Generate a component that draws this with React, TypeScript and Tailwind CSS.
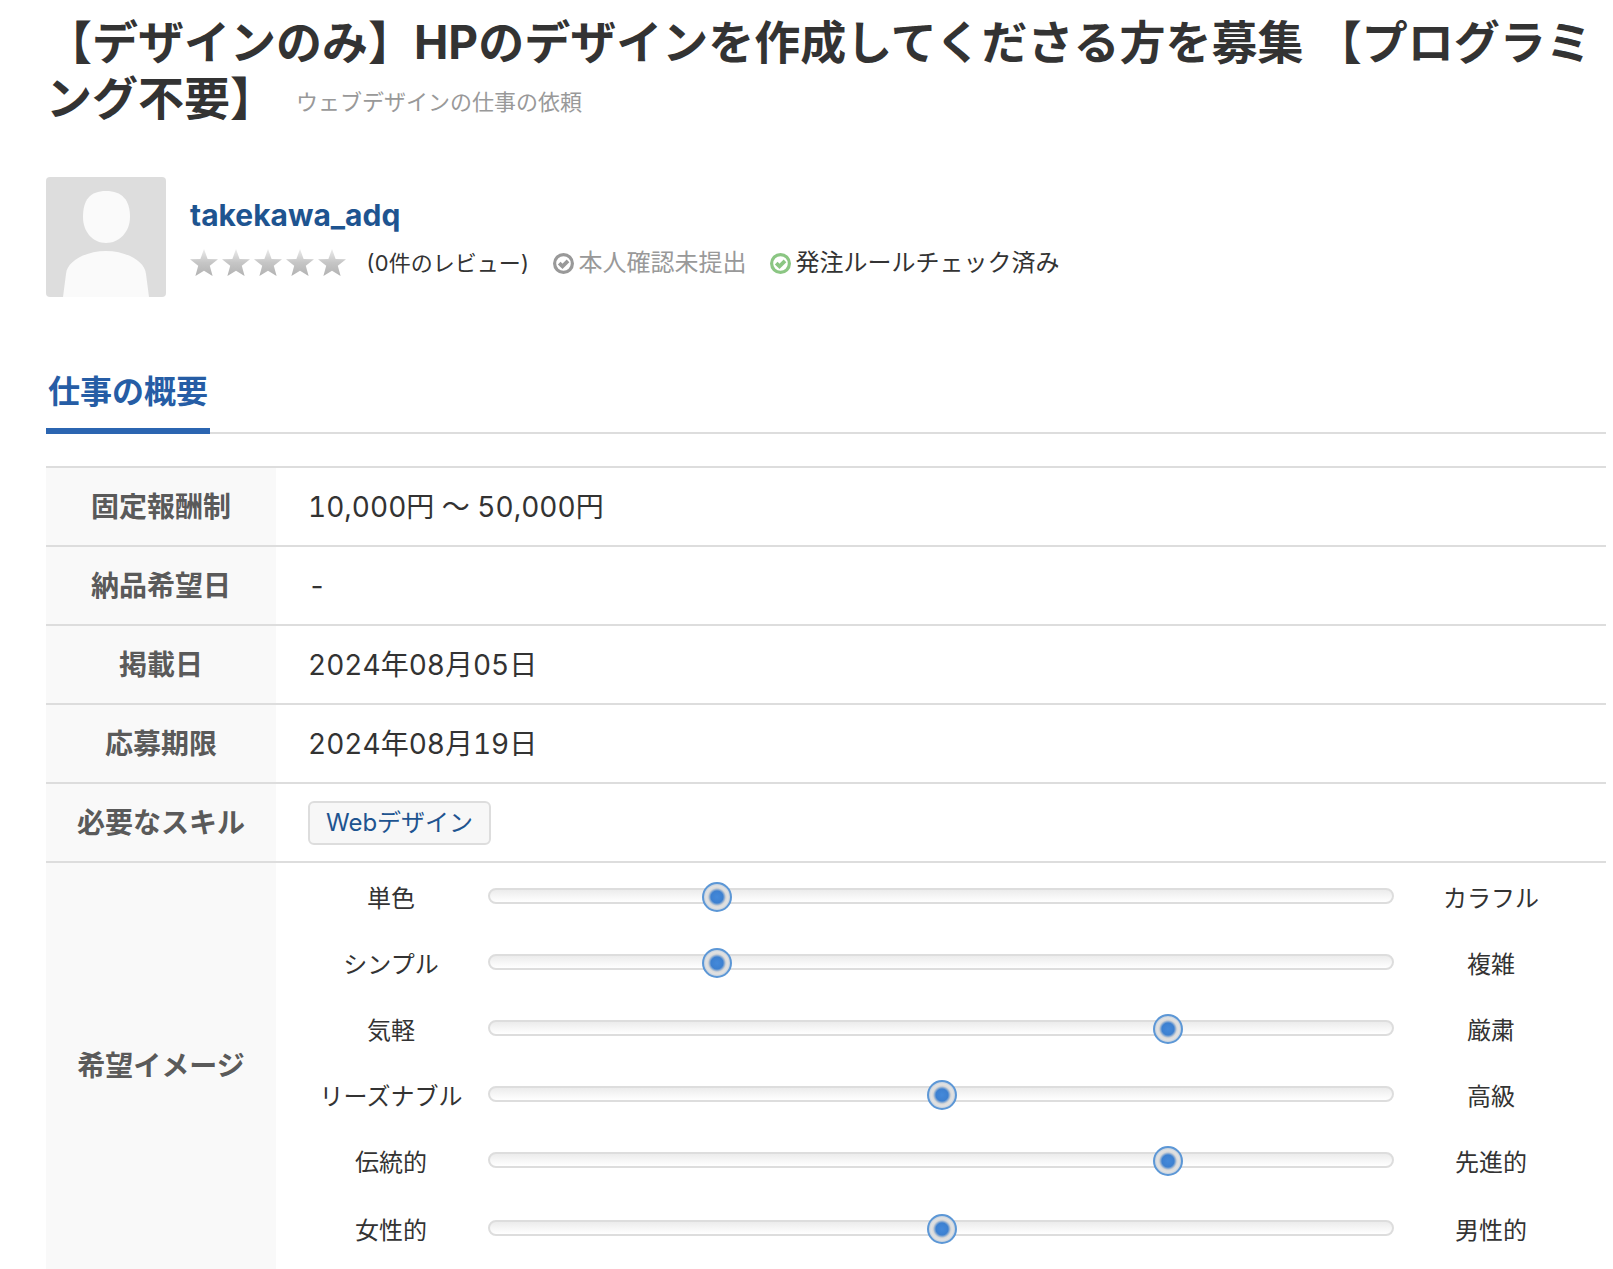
interface ImageScale {
  id: string;
  left: string;
  right: string;
  value: number;
}

const imageScales: ImageScale[] = [
  { id: 'color', left: '単色', right: 'カラフル', value: 1 },
  { id: 'complexity', left: 'シンプル', right: '複雑', value: 1 },
  { id: 'mood', left: '気軽', right: '厳粛', value: 3 },
  { id: 'price', left: 'リーズナブル', right: '高級', value: 2 },
  { id: 'tradition', left: '伝統的', right: '先進的', value: 3 },
  { id: 'gender', left: '女性的', right: '男性的', value: 2 },
];

const summaryRows = [
  { label: '固定報酬制', value: '10,000円 〜 50,000円' },
  { label: '納品希望日', value: '-' },
  { label: '掲載日', value: '2024年08月05日' },
  { label: '応募期限', value: '2024年08月19日' },
];

const thClass =
  'w-[230px] border-t-2 border-[#ddd] bg-[#f9f9f9] text-center text-[28px] leading-10 font-bold text-[#5a5a5a]';
const tdClass = 'h-[79px] border-t-2 border-[#ddd] px-8 text-[28px] leading-10';

function Avatar() {
  return (
    <svg viewBox="0 0 120 120" className="size-[120px] shrink-0 rounded" aria-hidden="true">
      <rect width="120" height="120" fill="#ddd" />
      <path
        d="M60 14C76 14 84 23 84 40C84 55 73 66 60 66C47 66 37 55 37 40C37 23 44 14 60 14Z"
        fill="#fafafa"
      />
      <path
        d="M17 120L20 97C21 84 40 74 60 74C80 74 99 84 100 97L103 120Z"
        fill="#fafafa"
      />
    </svg>
  );
}

function Stars() {
  return (
    <svg viewBox="0 0 156 28" className="h-7 w-[156px]" role="img" aria-label="評価 0">
      <defs>
        <linearGradient id="star" x1="0" y1="0" x2="0" y2="1">
          <stop offset="0" stopColor="#ececec" />
          <stop offset="0.5" stopColor="#c6c6c6" />
          <stop offset="1" stopColor="#b2b2b2" />
        </linearGradient>
      </defs>
      {[0, 32, 64, 96, 128].map((x) => (
        <path
          key={x}
          d="M14 0L17.6 10L28 10.3L19.8 16.8L22.6 27L14 21.8L5.4 27L8.2 16.8L0 10.3L10.4 10Z"
          transform={`translate(${x})`}
          fill="url(#star)"
        />
      ))}
    </svg>
  );
}

function CheckIcon({ className }: { className: string }) {
  return (
    <svg viewBox="0 0 21 21" className={`size-[21px] ${className}`} fill="none" stroke="currentColor" aria-hidden="true">
      <circle cx="10.5" cy="10.5" r="8.9" strokeWidth="3.2" />
      <path d="M6.2 10.1L9.5 13.3L15 7.9" strokeWidth="3.8" />
    </svg>
  );
}

function ScaleRow({ scale }: { scale: ImageScale }) {
  return (
    <div className="grid h-[66px] grid-cols-[166px_1fr_166px] items-center gap-x-3.5 text-center text-[24px] leading-8 last:mt-0.5">
      <label htmlFor={scale.id} className="pt-1.5">
        {scale.left}
      </label>
      <div className="relative h-4 rounded-full border-2 border-[#ddd] bg-linear-to-b from-[#ececec] to-white">
        <input
          id={scale.id}
          type="range"
          min={0}
          max={4}
          defaultValue={scale.value}
          className="absolute -top-2 -left-3.5 h-[30px] w-[calc(100%+30px)] appearance-none bg-transparent [&::-webkit-slider-thumb]:size-[30px] [&::-webkit-slider-thumb]:appearance-none [&::-webkit-slider-thumb]:rounded-full [&::-webkit-slider-thumb]:border-2 [&::-webkit-slider-thumb]:border-[#5c97d6] [&::-webkit-slider-thumb]:bg-[radial-gradient(circle,#4489da_0,#3d80d0_6px,#a9bdd4_8px,#d9d9d9_9px,#e2e2e2_11px,#b4c8de_14px)]"
        />
      </div>
      <span className="pt-1.5">{scale.right}</span>
    </div>
  );
}

export default function App() {
  return (
    <main
      lang="ja"
      className="bg-white pt-3.5 pr-[7px] pl-[46px] font-['Inter','Noto_Sans_CJK_JP',sans-serif] text-[#333] tabular-nums"
    >
      <h1 className="text-[46px] leading-14 font-bold">
        【デザインのみ】HPのデザインを作成してくださる方を募集 【プログラミング不要】
        <span className="ml-5 inline-block align-[5px] text-[22px] leading-8 font-normal text-[#999]">
          ウェブデザインの仕事の依頼
        </span>
      </h1>

      <section className="mt-[51px] flex gap-6">
        <Avatar />
        <div className="pt-5">
          <a href="#client" className="block text-[30px] leading-9 font-bold text-[#1e5490]">
            takekawa_adq
          </a>
          <div className="mt-3.5 flex items-center text-[24px] leading-8">
            <Stars />
            <span className="ml-5 text-[22px]">(0件のレビュー)</span>
            <span className="ml-6 flex items-center gap-1 text-[#999]">
              <CheckIcon className="text-[#999]" />
              本人確認未提出
            </span>
            <span className="ml-6 flex items-center gap-1">
              <CheckIcon className="text-[#8bc683]" />
              発注ルールチェック済み
            </span>
          </div>
        </div>
      </section>

      <div className="mt-[71px] flex border-b-2 border-[#ddd]">
        <h2 className="-mb-0.5 border-b-6 border-[#2b65b1] px-0.5 pb-3 text-[32px] leading-12 font-bold text-[#265da5]">
          仕事の概要
        </h2>
      </div>

      <table className="mt-8 w-full border-separate border-spacing-0">
        <tbody>
          {summaryRows.map((row) => (
            <tr key={row.label}>
              <th scope="row" className={thClass}>
                {row.label}
              </th>
              <td className={tdClass}>{row.value}</td>
            </tr>
          ))}
          <tr>
            <th scope="row" className={thClass}>
              必要なスキル
            </th>
            <td className={tdClass}>
              <a
                href="#web-design"
                className="block w-fit rounded-md border-2 border-[#ddd] bg-[#f7f7f7] px-4 py-1 text-[24px] leading-8 text-[#1e5490]"
              >
                Webデザイン
              </a>
            </td>
          </tr>
          <tr>
            <th scope="row" className={thClass}>
              希望イメージ
            </th>
            <td className="border-t-2 border-[#ddd] px-8 pb-2">
              {imageScales.map((scale) => (
                <ScaleRow key={scale.id} scale={scale} />
              ))}
            </td>
          </tr>
        </tbody>
      </table>
    </main>
  );
}
